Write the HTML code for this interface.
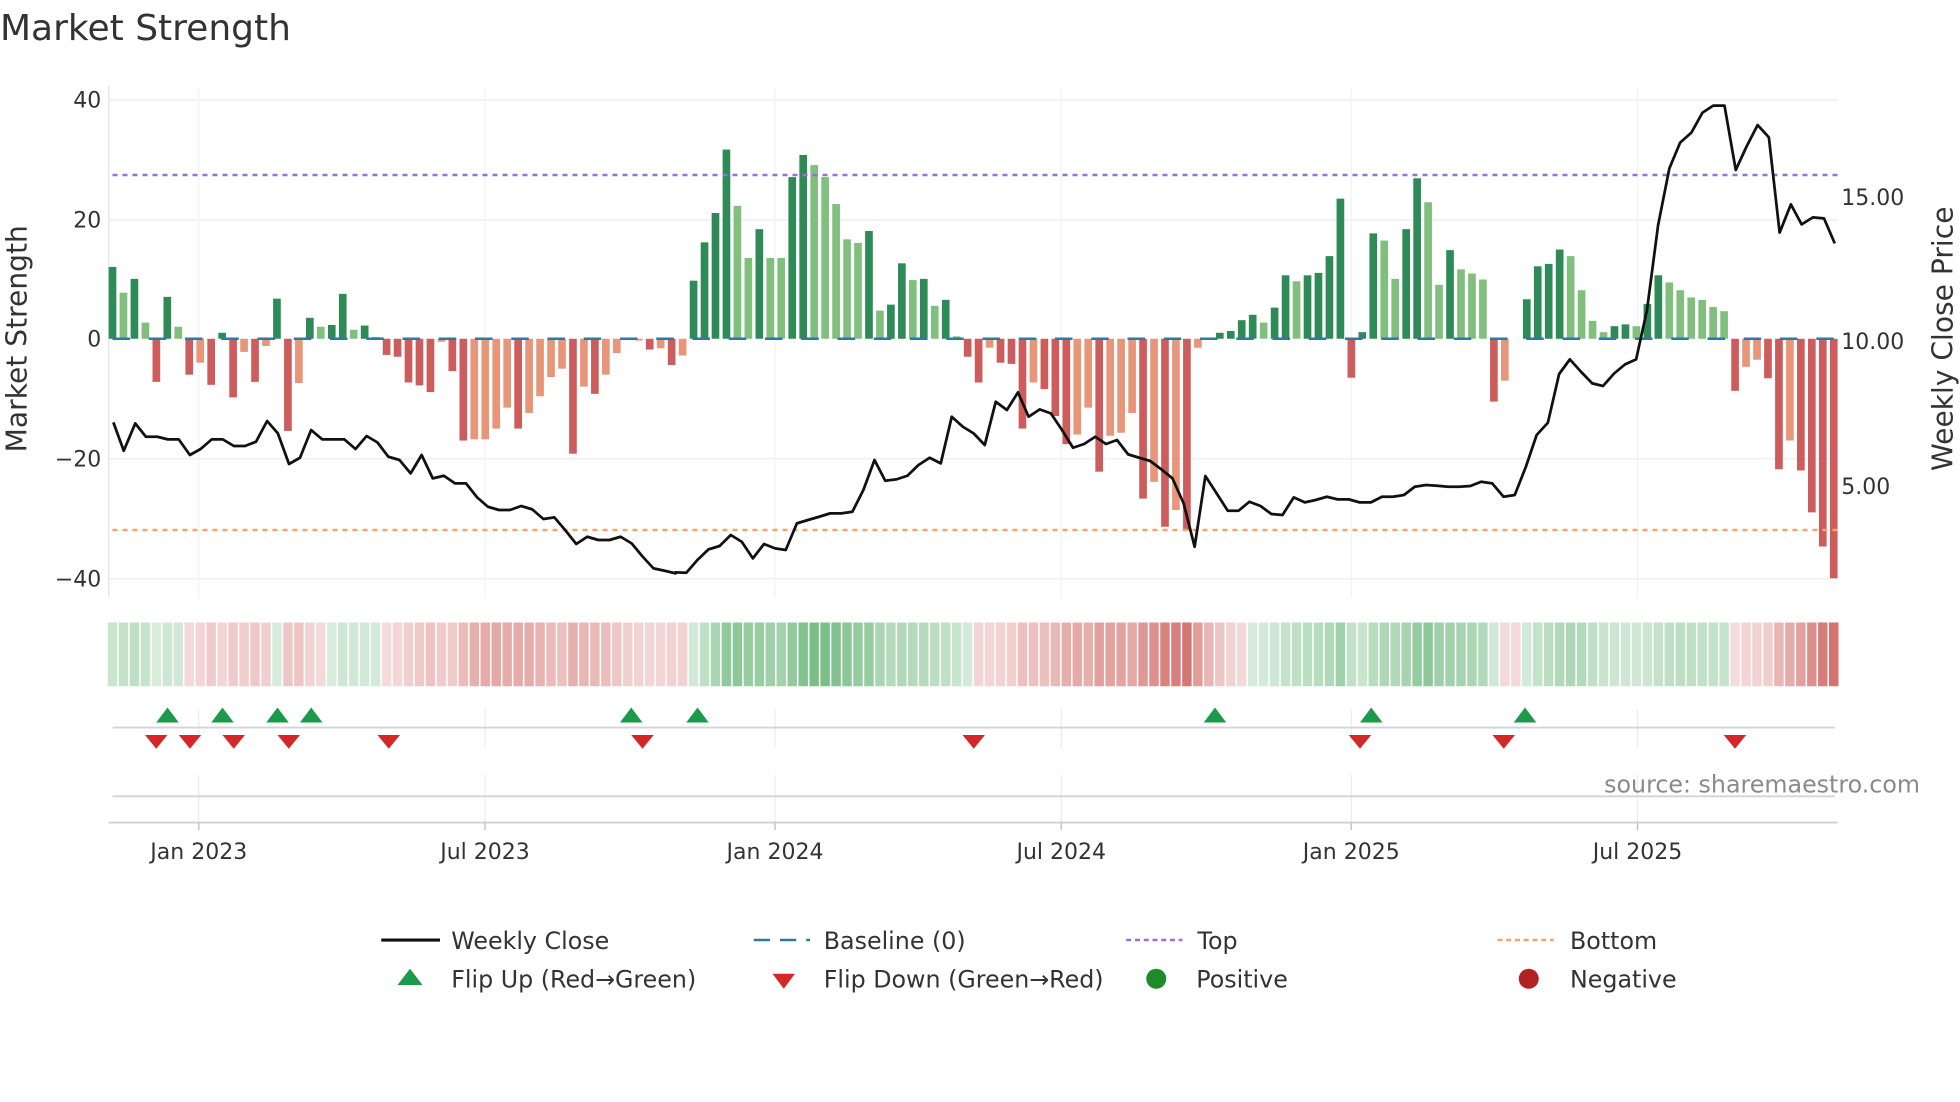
<!DOCTYPE html>
<html><head><meta charset="utf-8"><style>
html,body{margin:0;padding:0;background:#fff;}
svg{display:block;font-family:"DejaVu Sans","Liberation Sans",sans-serif;}
</style></head><body>
<svg id="s" width="1960" height="1102" viewBox="0 0 1568 881.6" xmlns="http://www.w3.org/2000/svg">
<rect width="1568" height="881.6" fill="#fff"/>
<text x="0" y="32" font-size="28.8" fill="#333">Market Strength</text>
<g stroke="#ebebf3" stroke-width="1">
<line x1="87" y1="80" x2="1470" y2="80"/><line x1="87" y1="176" x2="1470" y2="176"/>
<line x1="87" y1="367" x2="1470" y2="367"/><line x1="87" y1="463" x2="1470" y2="463"/>
<line x1="87" y1="68" x2="87" y2="478" stroke="#e3e3e8"/>
</g>
<g stroke="#f2f2f5" stroke-width="1">
<line x1="159" y1="70" x2="159" y2="478"/><line x1="388" y1="70" x2="388" y2="478"/>
<line x1="620" y1="70" x2="620" y2="478"/><line x1="849" y1="70" x2="849" y2="478"/>
<line x1="1081" y1="70" x2="1081" y2="478"/><line x1="1310" y1="70" x2="1310" y2="478"/>
</g>
<g font-size="17.6" fill="#333" text-anchor="end">
<text x="81" y="86">40</text><text x="81" y="182">20</text><text x="81" y="277">0</text>
<text x="81" y="373">−20</text><text x="81" y="469">−40</text>
</g>
<g font-size="17.6" fill="#333">
<text x="1473" y="164">15.00</text><text x="1473" y="279">10.00</text><text x="1473" y="395">5.00</text>
</g>
<text transform="translate(21,271) rotate(-90)" text-anchor="middle" font-size="22.5" fill="#333">Market Strength</text>
<text transform="translate(1562,271) rotate(-90)" text-anchor="middle" font-size="22.5" fill="#333">Weekly Close Price</text>
<g id="bars"></g>
<line x1="90" y1="271" x2="1468" y2="271" stroke="#2a7aa8" stroke-width="2" stroke-dasharray="14,15"/>
<line x1="90" y1="140" x2="1470" y2="140" stroke="#9a6ddc" stroke-width="2" stroke-dasharray="4,4"/>
<line x1="90" y1="424" x2="1470" y2="424" stroke="#f0a56c" stroke-width="2" stroke-dasharray="4,4"/>
<polyline id="price" fill="none" stroke="#111" stroke-width="2.2" stroke-linejoin="round"/>
<g id="strip"></g>
<g stroke="#ececf0" stroke-width="1">
<line x1="159" y1="567" x2="159" y2="598"/><line x1="388" y1="567" x2="388" y2="598"/>
<line x1="620" y1="567" x2="620" y2="598"/><line x1="849" y1="567" x2="849" y2="598"/>
<line x1="1081" y1="567" x2="1081" y2="598"/><line x1="1310" y1="567" x2="1310" y2="598"/>
<line x1="159" y1="620" x2="159" y2="658"/><line x1="388" y1="620" x2="388" y2="658"/>
<line x1="620" y1="620" x2="620" y2="658"/><line x1="849" y1="620" x2="849" y2="658"/>
<line x1="1081" y1="620" x2="1081" y2="658"/><line x1="1310" y1="620" x2="1310" y2="658"/>
</g>
<line x1="90" y1="582" x2="1468" y2="582" stroke="#d3d3d8" stroke-width="1.5"/>
<line x1="90" y1="637" x2="1468" y2="637" stroke="#d3d3d8" stroke-width="1.5"/>
<line x1="87" y1="658" x2="1470" y2="658" stroke="#cfcfd4" stroke-width="1.5"/>
<g stroke="#bbb" stroke-width="1">
<line x1="159" y1="658" x2="159" y2="664"/><line x1="388" y1="658" x2="388" y2="664"/>
<line x1="620" y1="658" x2="620" y2="664"/><line x1="849" y1="658" x2="849" y2="664"/>
<line x1="1081" y1="658" x2="1081" y2="664"/><line x1="1310" y1="658" x2="1310" y2="664"/>
</g>
<g id="marks"></g>
<text x="1536" y="634" text-anchor="end" font-size="19" fill="#8a8a8a">source: sharemaestro.com</text>
<g font-size="17.6" fill="#333" text-anchor="middle">
<text x="159" y="687">Jan 2023</text><text x="388" y="687">Jul 2023</text><text x="620" y="687">Jan 2024</text>
<text x="849" y="687">Jul 2024</text><text x="1081" y="687">Jan 2025</text><text x="1310" y="687">Jul 2025</text>
</g>
<g font-size="19" fill="#333">
<line x1="305" y1="752" x2="352" y2="752" stroke="#111" stroke-width="2.5"/>
<text x="361" y="759">Weekly Close</text>
<line x1="603" y1="752" x2="648" y2="752" stroke="#2a7aa8" stroke-width="2" stroke-dasharray="13,8"/>
<text x="659" y="759">Baseline (0)</text>
<line x1="901" y1="752" x2="946" y2="752" stroke="#9a6ddc" stroke-width="2" stroke-dasharray="4,3"/>
<text x="958" y="759">Top</text>
<line x1="1198" y1="752" x2="1243" y2="752" stroke="#f0a56c" stroke-width="2" stroke-dasharray="4,3"/>
<text x="1256" y="759">Bottom</text>
<polygon points="328,775 338,788 318,788" fill="#1a9a4a"/>
<text x="361" y="790">Flip Up (Red→Green)</text>
<polygon points="618,779 636,779 627,791" fill="#d62728"/>
<text x="659" y="790">Flip Down (Green→Red)</text>
<circle cx="925" cy="783" r="8" fill="#1f8a2a"/>
<text x="957" y="790">Positive</text>
<circle cx="1223" cy="783" r="8" fill="#b22222"/>
<text x="1256" y="790">Negative</text>
</g>
</svg>
<script>
(function(){
var NS="http://www.w3.org/2000/svg";
function el(t,a){var e=document.createElementNS(NS,t);for(var k in a)e.setAttribute(k,a[k]);return e;}
var D=[
[12,'d'],[7.7,'l'],[10,'d'],[2.7,'l'],[-7.2,'r'],[7,'d'],[2,'l'],[-6,'r'],[-4,'s'],[-7.7,'r'],[1,'d'],[-9.8,'r'],[-2.2,'s'],[-7.2,'r'],[-1.2,'s'],[6.7,'d'],[-15.4,'r'],[-7.4,'s'],[3.5,'d'],[2,'l'],[2.3,'d'],[7.5,'d'],[1.5,'l'],[2.2,'d'],[0.3,'l'],[-2.7,'r'],[-3,'r'],[-7.3,'r'],[-7.8,'r'],[-8.9,'r'],[-0.5,'s'],[-5.4,'r'],[-17,'r'],[-16.8,'s'],[-16.8,'s'],[-15,'s'],[-11.5,'s'],[-15,'r'],[-12.4,'s'],[-9.6,'s'],[-6.4,'s'],[-5,'s'],[-19.2,'r'],[-8,'s'],[-9.2,'r'],[-6,'s'],[-2.4,'s'],[0,'s'],[-0.3,'s'],
[-1.8,'r'],[-1.6,'s'],[-4.4,'r'],[-2.8,'s'],[9.7,'d'],[16.1,'d'],[21,'d'],[31.6,'d'],[22.2,'l'],[13.5,'l'],[18.3,'d'],[13.5,'l'],[13.5,'l'],[27,'d'],[30.7,'d'],[29,'l'],[27,'l'],[22.5,'l'],[16.6,'l'],[16,'l'],[18,'d'],[4.7,'l'],[5.7,'d'],[12.6,'d'],[9.8,'l'],[10,'d'],[5.5,'l'],[6.5,'d'],[0.4,'l'],[-3,'r'],[-7.3,'r'],[-1.5,'s'],[-4,'r'],[-4.2,'r'],[-15,'r'],[-7.3,'s'],[-8.4,'r'],[-12.9,'r'],[-17.6,'r'],[-16,'s'],[-11.5,'s'],[-22.2,'r'],[-16.2,'s'],[-15.7,'s'],[-12.4,'s'],[-26.7,'r'],[-23.9,'s'],[-31.4,'r'],[-28.6,'s'],[-32,'r'],[-1.5,'s'],
[0,'l'],[1,'d'],[1.3,'d'],[3.1,'d'],[4,'d'],[2.7,'l'],[5.2,'d'],[10.6,'d'],[9.6,'l'],[10.6,'d'],[11,'d'],[13.8,'d'],[23.4,'d'],[-6.5,'r'],[1.1,'d'],[17.6,'d'],[16.4,'l'],[10,'l'],[18.3,'d'],[26.8,'d'],[22.8,'l'],[9,'l'],[14.8,'d'],[11.6,'l'],[10.9,'l'],[9.9,'l'],[-10.5,'r'],[-7,'s'],[0,'l'],[6.6,'d'],[12.1,'d'],[12.5,'d'],[14.9,'d'],[13.8,'l'],[8.1,'l'],[3,'l'],[1.1,'l'],[2.1,'d'],[2.4,'d'],[2.1,'l'],[5.8,'d'],[10.6,'d'],[9.4,'l'],[8.1,'l'],[6.9,'l'],[6.5,'l'],[5.3,'l'],[4.6,'l'],[-8.7,'r'],[-4.7,'s'],[-3.5,'s'],[-6.6,'r'],[-21.8,'r'],[-17,'s'],[-22,'r'],[-29,'r'],[-34.7,'r'],[-40,'r']];
var C={d:'#2e8b57',l:'#80bf7d',r:'#cd5c5c',s:'#e8967a'};
var n=D.length,x0=90,x1=1467,sp=(x1-x0)/(n-1),bw=sp*0.7;
var gb=document.getElementById('bars'),gs=document.getElementById('strip');
var ema=0;
for(var i=0;i<n;i++){
 var v=D[i][0],cx=x0+i*sp,y0=271,h=Math.abs(v)*4.79;
 if(h>0.3)gb.appendChild(el('rect',{x:(cx-bw/2).toFixed(2),y:(v>0?y0-h:y0).toFixed(2),width:bw.toFixed(2),height:h.toFixed(2),fill:C[D[i][1]]}));
 ema=ema*0.6+v*0.4;
 var a=Math.min(1,0.25+Math.abs(ema)/30*0.75);
 var col=ema>=0?'rgba(60,160,80,'+(a*0.75).toFixed(2)+')':'rgba(200,80,75,'+(a*0.8).toFixed(2)+')';
 gs.appendChild(el('rect',{x:(cx-sp/2+0.6).toFixed(2),y:498,width:(sp-1.2).toFixed(2),height:51,fill:col}));
}
var z1=[[35,997],[62,1082],[92,1000],[120,1040],[150,1040],[177,1048],[206,1048],[235,1095],[263,1077],[292,1048],[321,1048],[350,1068],[379,1068],[408,1055],[437,993],[465,1030],[494,1122],[523,1103],[552,1020],[581,1048],[610,1048],[639,1048],[668,1077],[697,1038],[725,1057],[754,1100],[783,1110],[812,1150],[841,1095],[870,1165],[899,1157],[928,1180],[957,1180],[986,1222],[1014,1250],[1043,1260],[1072,1260],[1101,1248],[1130,1258],[1159,1287],[1188,1282],[1216,1320],[1245,1362],[1274,1340],[1303,1350],[1332,1350],[1361,1340],[1390,1360],[1419,1400],[1447,1435],[1476,1442],[1505,1450]];
var z2=[[66,1447],[95,1448],[124,1410],[153,1378],[182,1368],[211,1335],[240,1355],[269,1405],[298,1362],[327,1375],[355,1380],[384,1300],[413,1290],[442,1280],[471,1270],[500,1270],[529,1265],[558,1200],[587,1110],[615,1172],[644,1168],[673,1157],[702,1125],[731,1103],[760,1120],[789,980],[818,1010],[846,1030],[875,1065],[904,935],[933,960],[962,907],[990,980],[1019,958],[1048,970],[1077,1020],[1106,1073],[1135,1062],[1164,1040],[1192,1062],[1221,1050],[1250,1093],[1279,1103],[1308,1113],[1337,1138],[1366,1165],[1395,1240],[1424,1370]];
var z3=[[13,1158],[40,1210],[67,1262],[93,1262],[119,1235],[146,1248],[172,1272],[199,1275],[226,1222],[253,1237],[279,1230],[306,1220],[332,1228],[359,1228],[385,1237],[412,1237],[439,1220],[465,1220],[492,1215],[518,1190],[545,1185],[572,1187],[598,1190],[625,1190],[652,1188],[678,1175],[705,1180],[732,1220],[759,1215],[786,1130],[812,1035],[839,998],[866,852],[892,808],[919,845],[946,880],[972,888],[999,850],[1025,823],[1052,808],[1078,660],[1105,405],[1132,235],[1158,158],[1185,128],[1212,68],[1238,47],[1265,47],[1292,240],[1318,170],[1345,105],[1372,142],[1398,428],[1425,343],[1451,403],[1478,382],[1505,385],[1531,460]];
var pts=[];
z1.forEach(function(p){pts.push((80+p[0]*0.306).toFixed(1)+','+(72+p[1]*0.2667).toFixed(1));});
z2.forEach(function(p){pts.push((520+p[0]*0.306).toFixed(1)+','+(72+p[1]*0.2667).toFixed(1));});
z3.forEach(function(p){pts.push((960+p[0]*0.3317).toFixed(1)+','+(72+p[1]*0.2667).toFixed(1));});
document.getElementById('price').setAttribute('points',pts.join(' '));
var gm=document.getElementById('marks');
[134,178,222,249,505,558,972,1097,1220].forEach(function(x){gm.appendChild(el('polygon',{points:x+',566 '+(x+9)+',578 '+(x-9)+',578',fill:'#1a9a4a'}));});
[125,152,187,231,311,514,779,1088,1203,1388].forEach(function(x){gm.appendChild(el('polygon',{points:(x-9)+',588 '+(x+9)+',588 '+x+',599',fill:'#d62728'}));});
})();
</script>
</body></html>
